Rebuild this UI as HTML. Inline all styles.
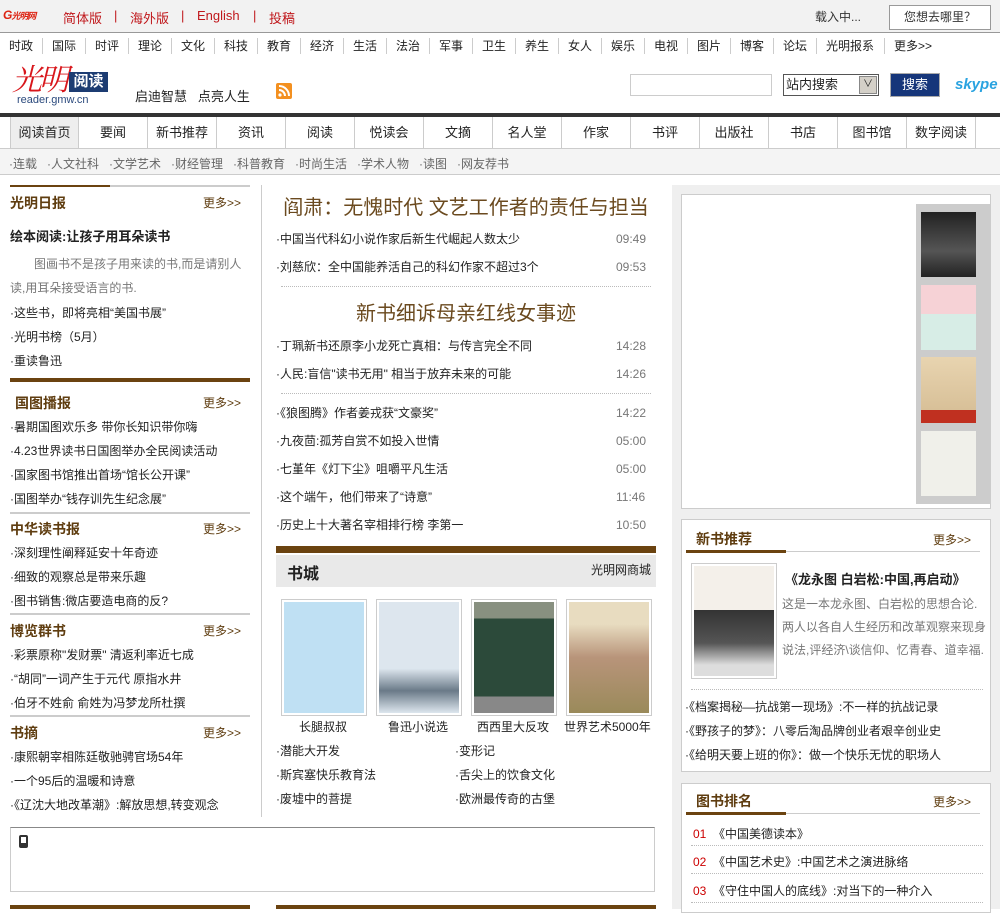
<!DOCTYPE html>
<html><head><meta charset="utf-8"><style>
*{margin:0;padding:0;box-sizing:border-box}
body{width:1000px;height:909px;overflow:hidden;position:relative;background:#fff;font-family:"Liberation Sans","Noto Sans CJK SC","WenQuanYi Zen Hei",sans-serif;font-size:12px;color:#222}
.a{position:absolute;white-space:nowrap}
.t{font-size:12px;line-height:16px}
.hdr{font-size:14px;font-weight:bold;color:#5f3d10}
.more{font-size:12px;color:#5f3d10}
.gt{color:#777}
.nv{display:flex;font-size:12px;line-height:16px}
.nv span{display:inline-block;width:43px;padding-left:0;border-right:1px solid #ccc;margin-right:9px;width:34px}
.nv span.w{width:59px}
.nv span:last-child{border:none}
</style></head><body>
<!-- top bar -->
<div class="a" style="left:0;top:0;width:1000px;height:33px;background:#f2f2f2;border-bottom:1px solid #999"></div>
<div class="a" style="left:3px;top:8px;font-size:12px;color:#d21;font-style:italic;font-weight:bold;letter-spacing:-1px">G<span style="font-size:9px">光明网</span></div>
<div class="a" style="left:63px;top:8px;font-size:13px;color:#c0181c">简体版</div>
<div class="a" style="left:114px;top:8px;font-size:13px;color:#c0181c">|</div>
<div class="a" style="left:130px;top:8px;font-size:13px;color:#c0181c">海外版</div>
<div class="a" style="left:181px;top:8px;font-size:13px;color:#c0181c">|</div>
<div class="a" style="left:197px;top:8px;font-size:13px;color:#c0181c">English</div>
<div class="a" style="left:253px;top:8px;font-size:13px;color:#c0181c">|</div>
<div class="a" style="left:269px;top:8px;font-size:13px;color:#c0181c">投稿</div>
<div class="a t" style="left:815px;top:9px;color:#333">载入中...</div>
<div class="a" style="left:889px;top:5px;width:102px;height:25px;border:1px solid #999;background:#fff;font-size:12px;text-align:center;line-height:23px;color:#333">您想去哪里？</div>
<!-- nav row -->
<div class="a nv" style="left:9px;top:38px"><span>时政</span><span>国际</span><span>时评</span><span>理论</span><span>文化</span><span>科技</span><span>教育</span><span>经济</span><span>生活</span><span>法治</span><span>军事</span><span>卫生</span><span>养生</span><span>女人</span><span>娱乐</span><span>电视</span><span>图片</span><span>博客</span><span>论坛</span><span class="w">光明报系</span><span style="width:60px">更多&gt;&gt;</span></div>
<!-- logo -->
<div class="a" style="left:12px;top:60px;font-size:30px;color:#d8161b;font-family:'Noto Serif CJK SC',serif;font-style:italic;line-height:34px;letter-spacing:-3px">光明</div>
<div class="a" style="left:69px;top:72px;width:39px;height:20px;background:#1c3c72;color:#fff;font-size:15px;font-weight:bold;line-height:20px;text-align:center">阅读</div>
<div class="a" style="left:17px;top:94px;font-size:11px;color:#2b4a7d">reader.gmw.cn</div>
<div class="a" style="left:135px;top:86px;font-size:13px;color:#222">启迪智慧&nbsp;&nbsp;&nbsp;点亮人生</div>
<div class="a" style="left:276px;top:83px;width:16px;height:16px;background:#f39020;border-radius:2px"><svg width="16" height="16"><circle cx="4" cy="12" r="1.6" fill="#fff"/><path d="M3 7a6 6 0 0 1 6 6M3 3a10 10 0 0 1 10 10" stroke="#fff" stroke-width="2" fill="none"/></svg></div>
<div class="a" style="left:630px;top:74px;width:142px;height:22px;border:1px solid #ccc"></div>
<div class="a" style="left:783px;top:74px;width:96px;height:22px;border:1px solid #555;background:#fff;font-size:13px;line-height:20px;padding-left:2px">站内搜索<span class="a" style="right:1px;top:1px;width:18px;height:18px;background:#d4d0c8;border:1px solid #888;font-size:10px;text-align:center;line-height:16px">∨</span></div>
<div class="a" style="left:890px;top:73px;width:50px;height:24px;background:#16367a;border:1px solid #aaa;color:#fff;font-size:13px;text-align:center;line-height:22px">搜索</div>
<div class="a" style="left:955px;top:76px;font-size:15px;font-weight:bold;color:#2aa3e0;font-style:italic">skype</div>
<!-- main nav -->
<div class="a" style="left:0;top:113px;width:1000px;height:4px;background:#333"></div>
<div class="a" style="left:0;top:148px;width:1000px;height:1px;background:#ccc"></div>
<div class="a" style="left:10px;top:117px;display:flex;font-size:13px;line-height:31px">
<div style="width:69px;text-align:center;background:#eee;border-left:1px solid #ccc;border-right:1px solid #ccc">阅读首页</div>
<div style="width:69px;text-align:center;border-right:1px solid #ccc">要闻</div>
<div style="width:69px;text-align:center;border-right:1px solid #ccc">新书推荐</div>
<div style="width:69px;text-align:center;border-right:1px solid #ccc">资讯</div>
<div style="width:69px;text-align:center;border-right:1px solid #ccc">阅读</div>
<div style="width:69px;text-align:center;border-right:1px solid #ccc">悦读会</div>
<div style="width:69px;text-align:center;border-right:1px solid #ccc">文摘</div>
<div style="width:69px;text-align:center;border-right:1px solid #ccc">名人堂</div>
<div style="width:69px;text-align:center;border-right:1px solid #ccc">作家</div>
<div style="width:69px;text-align:center;border-right:1px solid #ccc">书评</div>
<div style="width:69px;text-align:center;border-right:1px solid #ccc">出版社</div>
<div style="width:69px;text-align:center;border-right:1px solid #ccc">书店</div>
<div style="width:69px;text-align:center;border-right:1px solid #ccc">图书馆</div>
<div style="width:69px;text-align:center;border-right:1px solid #ccc">数字阅读</div>
</div>
<div class="a" style="left:0;top:149px;width:1000px;height:26px;background:#f4f4f4;border-bottom:1px solid #ccc"></div>
<div class="a" style="left:9px;top:155px;font-size:12px;color:#666">·连载&nbsp;&nbsp;&nbsp;·人文社科&nbsp;&nbsp;&nbsp;·文学艺术&nbsp;&nbsp;&nbsp;·财经管理&nbsp;&nbsp;&nbsp;·科普教育&nbsp;&nbsp;&nbsp;·时尚生活&nbsp;&nbsp;&nbsp;·学术人物&nbsp;&nbsp;&nbsp;·读图&nbsp;&nbsp;&nbsp;·网友荐书</div>

<!-- left column -->
<div class="a" style="left:10px;top:185px;width:240px;height:2px;background:#ccc"></div>
<div class="a" style="left:10px;top:185px;width:100px;height:2px;background:#6b4310"></div>
<div class="a hdr" style="left:10px;top:193px">光明日报</div>
<div class="a more" style="left:203px;top:194px">更多&gt;&gt;</div>
<div class="a" style="left:10px;top:226px;font-size:13px;font-weight:bold">绘本阅读:让孩子用耳朵读书</div>
<div class="a t gt" style="left:10px;top:252px;white-space:normal;width:240px;line-height:24px;text-indent:24px">图画书不是孩子用来读的书,而是请别人读,用耳朵接受语言的书.</div>
<div class="a t" style="left:10px;top:305px">·这些书，即将亮相“美国书展”</div>
<div class="a t" style="left:10px;top:329px">·光明书榜（5月）</div>
<div class="a t" style="left:10px;top:353px">·重读鲁迅</div>
<div class="a" style="left:10px;top:378px;width:240px;height:4px;background:#6b4310"></div>
<div class="a hdr" style="left:15px;top:393px">国图播报</div>
<div class="a more" style="left:203px;top:394px">更多&gt;&gt;</div>
<div class="a t" style="left:10px;top:419px">·暑期国图欢乐多 带你长知识带你嗨</div>
<div class="a t" style="left:10px;top:443px">·4.23世界读书日国图举办全民阅读活动</div>
<div class="a t" style="left:10px;top:467px">·国家图书馆推出首场“馆长公开课”</div>
<div class="a t" style="left:10px;top:491px">·国图举办“钱存训先生纪念展”</div>
<div class="a" style="left:10px;top:512px;width:240px;height:2px;background:#ccc"></div>
<div class="a hdr" style="left:10px;top:519px">中华读书报</div>
<div class="a more" style="left:203px;top:520px">更多&gt;&gt;</div>
<div class="a t" style="left:10px;top:545px">·深刻理性阐释延安十年奇迹</div>
<div class="a t" style="left:10px;top:569px">·细致的观察总是带来乐趣</div>
<div class="a t" style="left:10px;top:593px">·图书销售:微店要造电商的反?</div>
<div class="a" style="left:10px;top:613px;width:240px;height:2px;background:#ccc"></div>
<div class="a hdr" style="left:10px;top:621px">博览群书</div>
<div class="a more" style="left:203px;top:622px">更多&gt;&gt;</div>
<div class="a t" style="left:10px;top:647px">·彩票原称"发财票" 清返利率近七成</div>
<div class="a t" style="left:10px;top:671px">·“胡同”一词产生于元代 原指水井</div>
<div class="a t" style="left:10px;top:695px">·伯牙不姓俞 俞姓为冯梦龙所杜撰</div>
<div class="a" style="left:10px;top:715px;width:240px;height:2px;background:#ccc"></div>
<div class="a hdr" style="left:10px;top:723px">书摘</div>
<div class="a more" style="left:203px;top:724px">更多&gt;&gt;</div>
<div class="a t" style="left:10px;top:749px">·康熙朝宰相陈廷敬驰骋官场54年</div>
<div class="a t" style="left:10px;top:773px">·一个95后的温暖和诗意</div>
<div class="a t" style="left:10px;top:797px">·《辽沈大地改革潮》:解放思想,转变观念</div>
<div class="a" style="left:261px;top:185px;width:1px;height:632px;background:#ccc"></div>

<!-- middle -->
<div class="a" style="left:276px;top:191px;width:380px;text-align:center;font-size:20px;color:#6b4a1f">阎肃：无愧时代 文艺工作者的责任与担当</div>
<div class="a t" style="left:276px;top:231px">·中国当代科幻小说作家后新生代崛起人数太少</div><div class="a t gt" style="left:616px;top:231px">09:49</div>
<div class="a t" style="left:276px;top:259px">·刘慈欣：全中国能养活自己的科幻作家不超过3个</div><div class="a t gt" style="left:616px;top:259px">09:53</div>
<div class="a" style="left:281px;top:286px;width:370px;border-top:1px dotted #bbb"></div>
<div class="a" style="left:276px;top:297px;width:380px;text-align:center;font-size:20px;color:#6b4a1f">新书细诉母亲红线女事迹</div>
<div class="a t" style="left:276px;top:338px">·丁珮新书还原李小龙死亡真相：与传言完全不同</div><div class="a t gt" style="left:616px;top:338px">14:28</div>
<div class="a t" style="left:276px;top:366px">·人民:盲信"读书无用" 相当于放弃未来的可能</div><div class="a t gt" style="left:616px;top:366px">14:26</div>
<div class="a" style="left:281px;top:393px;width:370px;border-top:1px dotted #bbb"></div>
<div class="a t" style="left:276px;top:405px">·《狼图腾》作者姜戎获“文豪奖”</div><div class="a t gt" style="left:616px;top:405px">14:22</div>
<div class="a t" style="left:276px;top:433px">·九夜茴:孤芳自赏不如投入世情</div><div class="a t gt" style="left:616px;top:433px">05:00</div>
<div class="a t" style="left:276px;top:461px">·七堇年《灯下尘》咀嚼平凡生活</div><div class="a t gt" style="left:616px;top:461px">05:00</div>
<div class="a t" style="left:276px;top:489px">·这个端午，他们带来了“诗意”</div><div class="a t gt" style="left:616px;top:489px">11:46</div>
<div class="a t" style="left:276px;top:517px">·历史上十大著名宰相排行榜 李第一</div><div class="a t gt" style="left:616px;top:517px">10:50</div>
<div class="a" style="left:276px;top:546px;width:380px;height:7px;background:#6b4310"></div>
<div class="a" style="left:276px;top:555px;width:380px;height:32px;background:#e9e9e9"></div>
<div class="a" style="left:287px;top:560px;font-size:16px;font-weight:bold">书城</div>
<div class="a t" style="left:591px;top:562px">光明网商城</div>
<div class="a" style="left:281px;top:599px;width:86px;height:117px;border:1px solid #ccc;padding:2px"><div style="width:100%;height:100%;background:#bfe0f3"></div></div>
<div class="a" style="left:376px;top:599px;width:86px;height:117px;border:1px solid #ccc;padding:2px"><div style="width:100%;height:100%;background:linear-gradient(#dde6ee 60%,#6a7a88 80%,#dde6ee)"></div></div>
<div class="a" style="left:471px;top:599px;width:86px;height:117px;border:1px solid #ccc;padding:2px"><div style="width:100%;height:100%;background:linear-gradient(#889080 15%,#2c4a3a 15%,#2c4a3a 85%,#888 85%)"></div></div>
<div class="a" style="left:566px;top:599px;width:86px;height:117px;border:1px solid #ccc;padding:2px"><div style="width:100%;height:100%;background:linear-gradient(#e8dcc0 20%,#b8947a 50%,#9a8a5a)"></div></div>
<div class="a t" style="left:299px;top:719px">长腿叔叔</div>
<div class="a t" style="left:388px;top:719px">鲁迅小说选</div>
<div class="a t" style="left:477px;top:719px">西西里大反攻</div>
<div class="a t" style="left:564px;top:719px">世界艺术5000年</div>
<div class="a t" style="left:276px;top:743px">·潜能大开发</div><div class="a t" style="left:455px;top:743px">·变形记</div>
<div class="a t" style="left:276px;top:767px">·斯宾塞快乐教育法</div><div class="a t" style="left:455px;top:767px">·舌尖上的饮食文化</div>
<div class="a t" style="left:276px;top:791px">·废墟中的菩提</div><div class="a t" style="left:455px;top:791px">·欧洲最传奇的古堡</div>

<!-- bottom left box -->
<div class="a" style="left:10px;top:827px;width:645px;height:65px;border:1px solid #ccc;border-top-color:#888"></div>
<div class="a" style="left:19px;top:835px;width:9px;height:13px;background:#333;border-radius:2px"><div style="margin:2px;width:5px;height:6px;background:#fff"></div></div>
<div class="a" style="left:10px;top:905px;width:240px;height:4px;background:#6b4310"></div>
<div class="a" style="left:276px;top:905px;width:380px;height:4px;background:#6b4310"></div>

<!-- right column -->
<div class="a" style="left:672px;top:185px;width:328px;height:724px;background:#efefef"></div>
<div class="a" style="left:681px;top:194px;width:310px;height:315px;background:#fff;border:1px solid #ccc"></div>
<div class="a" style="left:916px;top:204px;width:75px;height:300px;background:#ccc"></div>
<div class="a" style="left:921px;top:212px;width:55px;height:65px;background:linear-gradient(#222,#555 60%,#222)"></div>
<div class="a" style="left:921px;top:285px;width:55px;height:65px;background:linear-gradient(#f6d2d6 45%,#d7ede6 45%)"></div>
<div class="a" style="left:921px;top:357px;width:55px;height:66px;background:linear-gradient(#e8d4b0,#d8c098 80%,#c03020 80%)"></div>
<div class="a" style="left:921px;top:431px;width:55px;height:65px;background:#f0f0ea"></div>
<div class="a" style="left:681px;top:519px;width:310px;height:253px;background:#fff;border:1px solid #ccc"></div>
<div class="a" style="left:696px;top:529px;font-size:14px;font-weight:bold;color:#5f3d10">新书推荐</div>
<div class="a more" style="left:933px;top:531px">更多&gt;&gt;</div>
<div class="a" style="left:686px;top:551px;width:294px;height:1px;background:#ccc"></div>
<div class="a" style="left:686px;top:550px;width:100px;height:3px;background:#6b4310"></div>
<div class="a" style="left:691px;top:563px;width:86px;height:116px;border:1px solid #ccc;padding:2px"><div style="width:100%;height:100%;background:linear-gradient(#f4f0ea 40%,#333 40%,#555 70%,#ddd 90%)"></div></div>
<div class="a" style="left:785px;top:569px;font-size:13px;font-weight:bold">《龙永图 白岩松:中国,再启动》</div>
<div class="a gt" style="left:782px;top:593px;width:206px;white-space:normal;font-size:12px;line-height:23px">这是一本龙永图、白岩松的思想合论.两人以各自人生经历和改革观察来现身说法,评经济\谈信仰、忆青春、道幸福.</div>
<div class="a" style="left:691px;top:689px;width:292px;border-top:1px dotted #bbb"></div>
<div class="a t" style="left:685px;top:699px">·《档案揭秘—抗战第一现场》:不一样的抗战记录</div>
<div class="a t" style="left:685px;top:723px">·《野孩子的梦》：八零后淘品牌创业者艰辛创业史</div>
<div class="a t" style="left:685px;top:747px">·《给明天要上班的你》：做一个快乐无忧的职场人</div>
<div class="a" style="left:681px;top:783px;width:310px;height:130px;background:#fff;border:1px solid #ccc"></div>
<div class="a" style="left:696px;top:791px;font-size:14px;font-weight:bold;color:#5f3d10">图书排名</div>
<div class="a more" style="left:933px;top:793px">更多&gt;&gt;</div>
<div class="a" style="left:686px;top:813px;width:294px;height:1px;background:#ccc"></div>
<div class="a" style="left:686px;top:812px;width:100px;height:3px;background:#6b4310"></div>
<div class="a t" style="left:693px;top:826px"><span style="color:#c00">01</span>&nbsp;&nbsp;《中国美德读本》</div>
<div class="a" style="left:691px;top:845px;width:292px;border-top:1px dotted #bbb"></div>
<div class="a t" style="left:693px;top:854px"><span style="color:#c00">02</span>&nbsp;&nbsp;《中国艺术史》:中国艺术之演进脉络</div>
<div class="a" style="left:691px;top:873px;width:292px;border-top:1px dotted #bbb"></div>
<div class="a t" style="left:693px;top:883px"><span style="color:#c00">03</span>&nbsp;&nbsp;《守住中国人的底线》:对当下的一种介入</div>
<div class="a" style="left:691px;top:902px;width:292px;border-top:1px dotted #bbb"></div>
</body></html>
